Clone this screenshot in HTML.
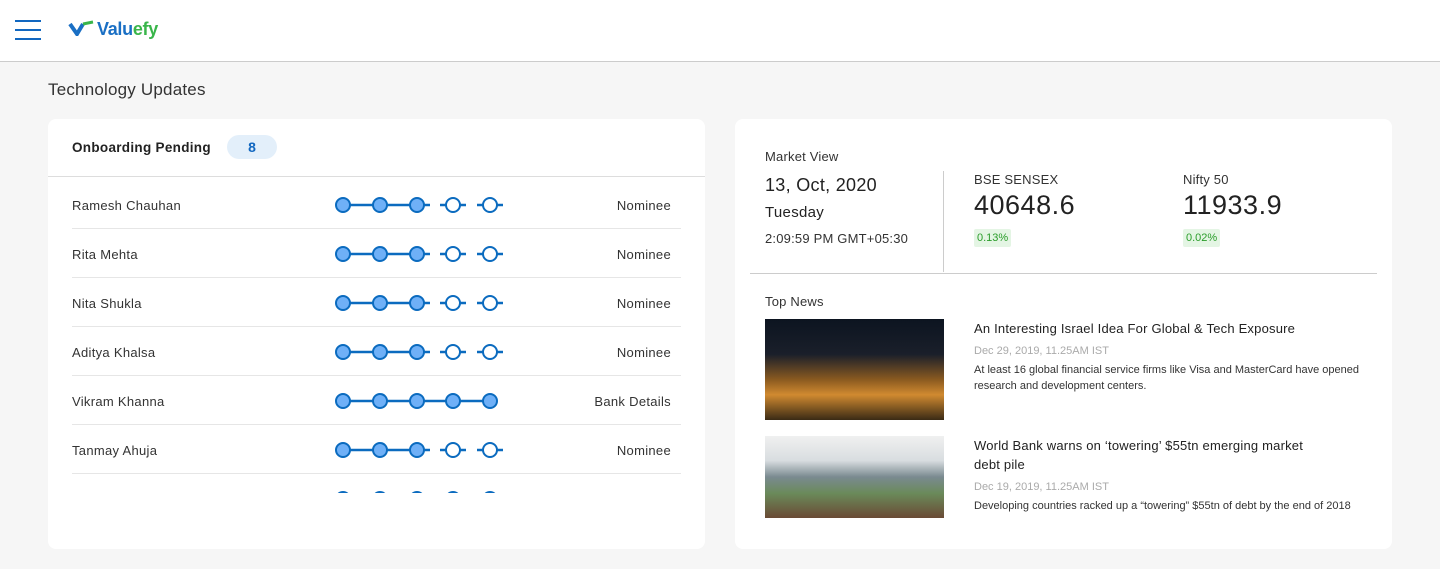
<!DOCTYPE html>
<html><head><style>
*{margin:0;padding:0;box-sizing:border-box}
body{width:1440px;height:569px;background:#f6f6f6;font-family:"Liberation Sans",sans-serif;color:#222;overflow:hidden;position:relative}
.hdr{position:absolute;left:0;top:0;width:1440px;height:62px;background:#fff;border-bottom:1px solid #ccc}
.ham{position:absolute;left:15px;width:26px;height:2px;background:#1167c0}
.title{position:absolute;left:48px;top:80px;font-size:17px;color:#333;letter-spacing:0.2px}
.card{position:absolute;background:#fff;border-radius:8px;top:119px;height:430px}
.row{position:absolute;left:24px;width:609px;height:49px;border-bottom:1px solid #e6e6e6;font-size:13px;color:#333}
.row .n{position:absolute;left:0;top:18px;letter-spacing:0.3px}
.row .s{position:absolute;right:10px;top:18px;letter-spacing:0.3px}
.row svg{position:absolute;left:260px;top:13px}
.sm{font-size:13px;color:#333;letter-spacing:0.2px}
</style></head><body>
<svg width="0" height="0" style="position:absolute">
<defs>
<g id="a"><g stroke="#0b6bbf" stroke-width="2.5"><line x1="11" y1="12" x2="98" y2="12"/><line x1="108" y1="12" x2="114" y2="12"/><line x1="128" y1="12" x2="134" y2="12"/><line x1="145" y1="12" x2="151" y2="12"/><line x1="165" y1="12" x2="171" y2="12"/></g><g stroke="#0b6bbf" stroke-width="2"><circle cx="11" cy="12" r="7" fill="#6fb0f7"/><circle cx="48" cy="12" r="7" fill="#6fb0f7"/><circle cx="85" cy="12" r="7" fill="#6fb0f7"/><circle cx="121" cy="12" r="7" fill="#fff"/><circle cx="158" cy="12" r="7" fill="#fff"/></g></g>
</defs></svg>
<div class="hdr">
<div class="ham" style="top:20px"></div><div class="ham" style="top:29px"></div><div class="ham" style="top:38px"></div>
<svg style="position:absolute;left:68px;top:20px" width="26" height="16"><path d="M2 4 L9 14 L15 4" stroke="#1a6fc4" stroke-width="4" fill="none"/><path d="M15 4 L25 2" stroke="#39b54a" stroke-width="3"/></svg>
<div style="position:absolute;left:97px;top:19px;font-size:18px;color:#1a6fc4;font-weight:bold;letter-spacing:-0.3px">Valu<span style="color:#39b54a">efy</span></div>
</div>
<div class="title">Technology Updates</div>
<div class="card" style="left:48px;width:657px">
<div style="position:absolute;left:24px;top:21px;font-size:13.5px;font-weight:bold;letter-spacing:0.3px">Onboarding Pending</div>
<div style="position:absolute;left:179px;top:16px;width:50px;height:24px;border-radius:12px;background:#e3effa;color:#1167c0;font-weight:bold;font-size:14px;text-align:center;line-height:24px">8</div>
<div style="position:absolute;left:0;top:57px;width:657px;border-top:1px solid #ddd"></div>
</div>
<div style="position:absolute;left:48px;top:180px;width:657px;height:313px;overflow:hidden">
<div class="row" style="top:0"><span class="n">Ramesh Chauhan</span><svg width="200" height="24"><use href="#a"/></svg><span class="s">Nominee</span></div>
<div class="row" style="top:49px"><span class="n">Rita Mehta</span><svg width="200" height="24"><use href="#a"/></svg><span class="s">Nominee</span></div>
<div class="row" style="top:98px"><span class="n">Nita Shukla</span><svg width="200" height="24"><use href="#a"/></svg><span class="s">Nominee</span></div>
<div class="row" style="top:147px"><span class="n">Aditya Khalsa</span><svg width="200" height="24"><use href="#a"/></svg><span class="s">Nominee</span></div>
<div class="row" style="top:196px"><span class="n">Vikram Khanna</span><svg width="200" height="24"><g stroke="#0b6bbf" stroke-width="2.5"><line x1="11" y1="12" x2="158" y2="12"/></g><g stroke="#0b6bbf" stroke-width="2"><circle cx="11" cy="12" r="7" fill="#6fb0f7"/><circle cx="48" cy="12" r="7" fill="#6fb0f7"/><circle cx="85" cy="12" r="7" fill="#6fb0f7"/><circle cx="121" cy="12" r="7" fill="#6fb0f7"/><circle cx="158" cy="12" r="7" fill="#6fb0f7"/></g></svg><span class="s">Bank Details</span></div>
<div class="row" style="top:245px"><span class="n">Tanmay Ahuja</span><svg width="200" height="24"><use href="#a"/></svg><span class="s">Nominee</span></div>
<div class="row" style="top:294px;border:none"><svg width="200" height="24"><use href="#a"/></svg></div>
</div>
<div class="card" style="left:735px;width:657px">
<div class="sm" style="position:absolute;left:30px;top:30px">Market View</div>
<div style="position:absolute;left:30px;top:56px;font-size:18px;letter-spacing:0.3px">13, Oct, 2020</div>
<div style="position:absolute;left:30px;top:85px;font-size:15px;letter-spacing:0.3px">Tuesday</div>
<div class="sm" style="position:absolute;left:30px;top:112px">2:09:59 PM GMT+05:30</div>
<div style="position:absolute;left:208px;top:52px;height:101px;border-left:1px solid #ccc"></div>
<div class="sm" style="position:absolute;left:239px;top:53px">BSE SENSEX</div>
<div style="position:absolute;left:239px;top:71px;font-size:27px;letter-spacing:0.5px">40648.6</div>
<div style="position:absolute;left:239px;top:110px;font-size:11px;color:#2a9d2a;background:#e4f5e4;padding:3px 3px;border-radius:2px">0.13%</div>
<div class="sm" style="position:absolute;left:448px;top:53px">Nifty 50</div>
<div style="position:absolute;left:448px;top:71px;font-size:27px;letter-spacing:0.5px">11933.9</div>
<div style="position:absolute;left:448px;top:110px;font-size:11px;color:#2a9d2a;background:#e4f5e4;padding:3px 3px;border-radius:2px">0.02%</div>
<div style="position:absolute;left:15px;top:154px;width:627px;border-top:1px solid #ccc"></div>
<div class="sm" style="position:absolute;left:30px;top:175px">Top News</div>
<div style="position:absolute;left:30px;top:200px;width:179px;height:101px;background:linear-gradient(180deg,#0c1420 0%,#1a1f2a 35%,#8a5a20 60%,#d08a30 75%,#3a2a15 100%)"></div>
<div style="position:absolute;left:239px;top:202px;font-size:13px;letter-spacing:0.2px">An Interesting Israel Idea For Global &amp; Tech Exposure</div>
<div style="position:absolute;left:239px;top:226px;font-size:11px;color:#aaa">Dec 29, 2019, 11.25AM IST</div>
<div style="position:absolute;left:239px;top:243px;width:395px;font-size:11px;line-height:16px;color:#333">At least 16 global financial service firms like Visa and MasterCard have opened research and development centers.</div>
<div style="position:absolute;left:30px;top:317px;width:179px;height:82px;background:linear-gradient(180deg,#f0f0f0 0%,#d8dde0 30%,#7a8a90 50%,#6a8a5a 70%,#6a4a35 100%)"></div>
<div style="position:absolute;left:239px;top:317px;width:340px;font-size:13px;line-height:19px;letter-spacing:0.2px">World Bank warns on ‘towering’ $55tn emerging market debt pile</div>
<div style="position:absolute;left:239px;top:362px;font-size:11px;color:#aaa">Dec 19, 2019, 11.25AM IST</div>
<div style="position:absolute;left:239px;top:379px;width:395px;height:22px;overflow:hidden;font-size:11px;line-height:16px;color:#333">Developing countries racked up a “towering” $55tn of debt by the end of 2018</div>
</div>
</body></html>
